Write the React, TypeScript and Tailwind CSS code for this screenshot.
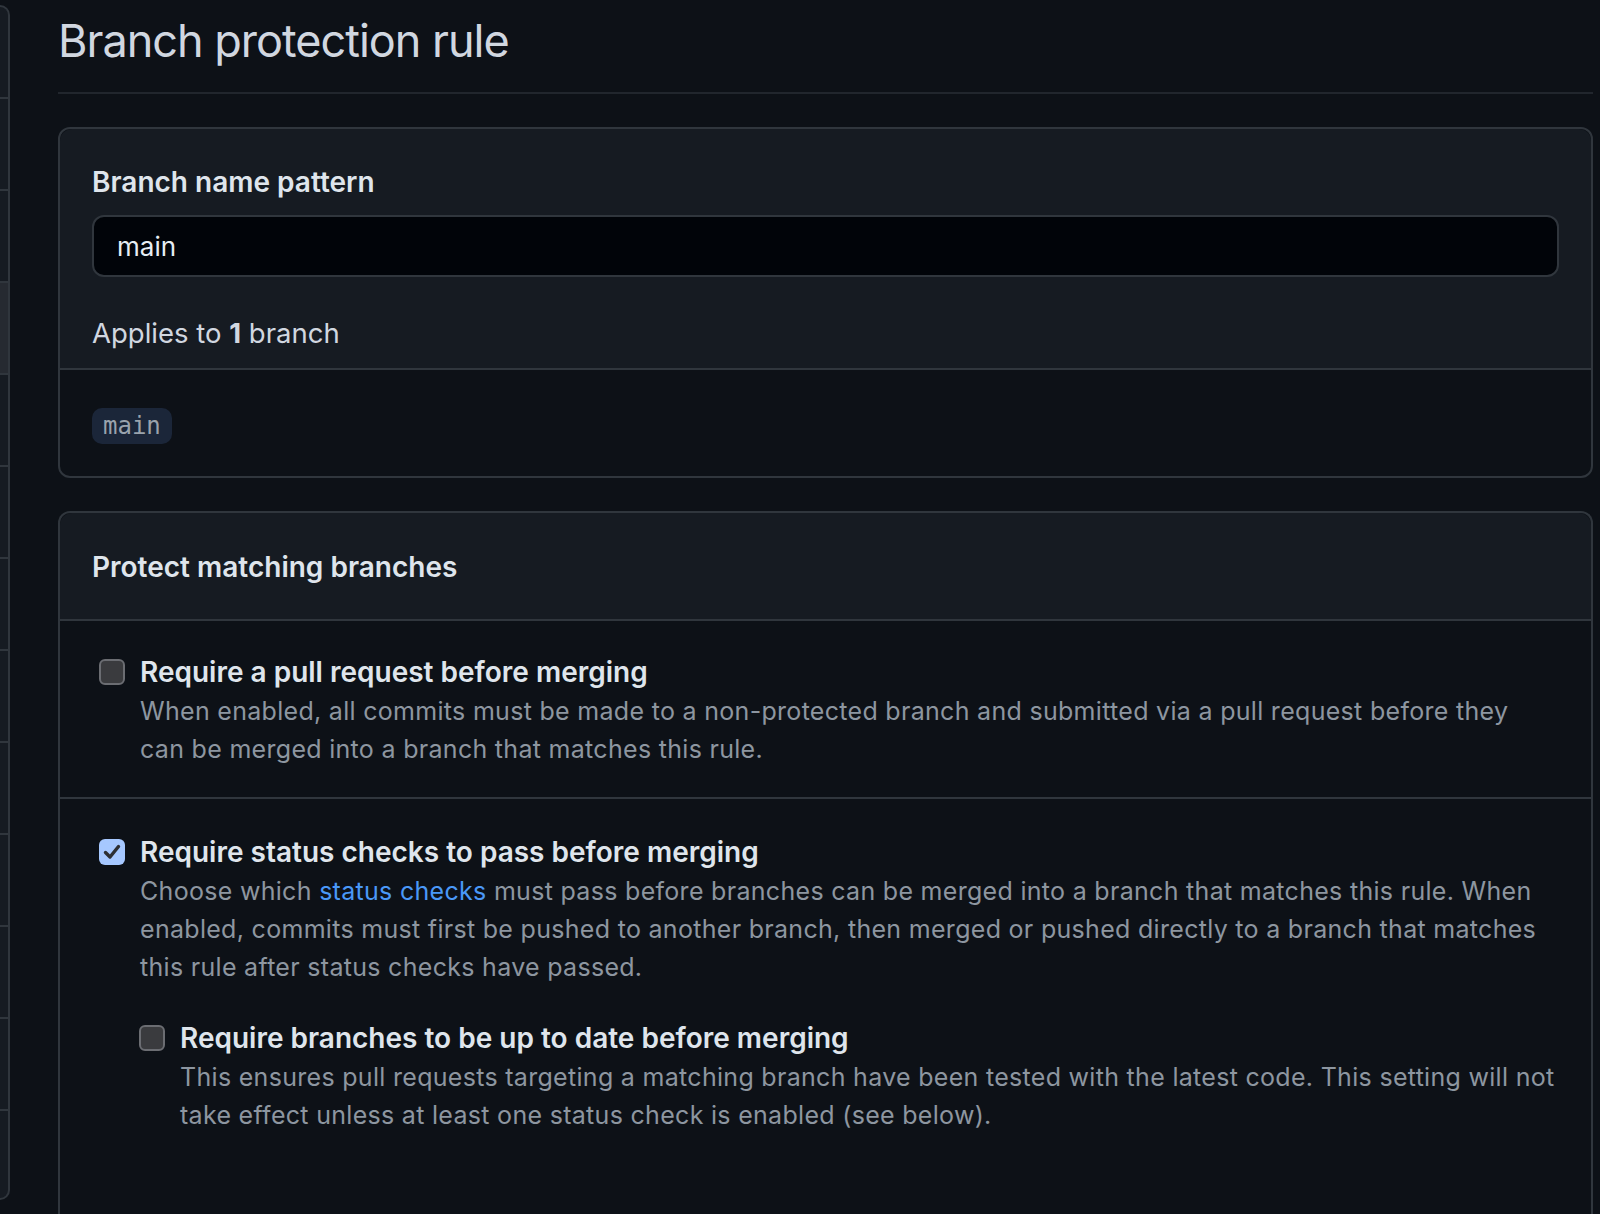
const sidebarRows = [false, false, false, true, false, false, false, false, false, false, false, false, false];

function Checkbox({ checked }: { checked?: boolean }) {
  if (checked) {
    return (
      <span className="mt-[1px] flex h-[26px] w-[26px] shrink-0 items-center justify-center rounded-[6px] bg-[#a6c8ff]">
        <svg width="18" height="16" viewBox="0 0 18 16" fill="none">
          <path d="M2.5 8.5 L7 13 L15.5 2.5" stroke="#2d2f33" strokeWidth="3.4" strokeLinecap="round" strokeLinejoin="round" />
        </svg>
      </span>
    );
  }
  return <span className="mt-[1px] block h-[26px] w-[26px] shrink-0 rounded-[6px] border-2 border-[#6b6d72] bg-[#3a3b3e]" />;
}

interface RuleProps {
  checked?: boolean;
  title: string;
  children: React.ReactNode;
}

function Rule({ checked, title, children }: RuleProps) {
  return (
    <div className="flex gap-[15px]">
      <Checkbox checked={checked} />
      <div className="-mt-[4px] min-w-0 flex-1">
        <div className="text-[28px] font-semibold leading-[36px] text-[#dfe5ec]">{title}</div>
        <p className="mt-[2px] text-[25px] leading-[38px] tracking-[0.3px] text-[#8d96a0]">{children}</p>
      </div>
    </div>
  );
}

export default function App() {
  return (
    <div className="flex min-h-screen bg-[#0d1117]" style={{ fontFamily: 'Inter, "Noto Sans", sans-serif' }}>
      <aside className="w-[10px] shrink-0 pt-[5px]">
        <div className="h-[1195px] overflow-hidden rounded-r-[12px] border-y-2 border-r-2 border-[#30363d] bg-[#161b22]">
          {sidebarRows.map((active, i) => (
            <div key={i} className={`h-[92px] border-b-2 border-[#30363d] ${active ? 'bg-[#262a31]' : ''}`} />
          ))}
        </div>
      </aside>

      <main className="ml-[48px] w-[1535px] shrink-0">
        <div className="border-b-2 border-[#21262d] pt-[11px] pb-[21px]">
          <h1 className="text-[45px] font-normal leading-[60px] tracking-[-1px] text-[#d1d7e0]">Branch protection rule</h1>
        </div>

        <section className="mt-[33px] rounded-[12px] border-2 border-[#30363d]">
          <div className="rounded-t-[12px] bg-[#161b22] px-[32px] pt-[35px] pb-[17px]">
            <label className="block text-[28px] font-semibold leading-[36px] text-[#dfe5ec]">Branch name pattern</label>
            <div className="mt-[15px] flex h-[62px] items-center rounded-[12px] border-2 border-[#30363d] bg-[#010409] px-[23px] text-[26px] text-[#e6edf3]">
              main
            </div>
            <p className="mt-[38px] text-[27.5px] leading-[36px] text-[#d1d7e0]">
              Applies to <span className="font-bold">1</span> branch
            </p>
          </div>
          <div className="border-t-2 border-[#30363d] px-[32px] pt-[38px] pb-[32px]">
            <code
              className="inline-block rounded-[10px] bg-[#1b2639] px-[11px] text-[24px] leading-[36px] text-[#9aa3ad]"
              style={{ fontFamily: '"DejaVu Sans Mono", monospace' }}
            >
              main
            </code>
          </div>
        </section>

        <section className="mt-[33px] rounded-t-[12px] border-x-2 border-t-2 border-[#30363d]">
          <div className="rounded-t-[12px] bg-[#161b22] px-[32px] pt-[36px] pb-[34px]">
            <h2 className="text-[28px] font-semibold leading-[36px] text-[#dfe5ec]">Protect matching branches</h2>
          </div>

          <div className="border-t-2 border-[#30363d] pt-[37px] pr-[32px] pb-[29px] pl-[39px]">
            <Rule title="Require a pull request before merging">
              When enabled, all commits must be made to a non-protected branch and submitted via a pull request before they can
              be merged into a branch that matches this rule.
            </Rule>
          </div>

          <div className="border-t-2 border-[#30363d] pt-[39px] pr-[32px] pb-[90px] pl-[39px]">
            <Rule checked title="Require status checks to pass before merging">
              Choose which <a className="text-[#4a98f7]">status checks</a> must pass before branches can be merged into a branch
              that matches this rule. When enabled, commits must first be pushed to another branch, then merged or pushed
              directly to a branch that matches this rule after status checks have passed.
            </Rule>
            <div className="mt-[38px] pl-[40px]">
              <Rule title="Require branches to be up to date before merging">
                This ensures pull requests targeting a matching branch have been tested with the latest code. This setting will
                not take effect unless at least one status check is enabled (see below).
              </Rule>
            </div>
          </div>
        </section>
      </main>
    </div>
  );
}
